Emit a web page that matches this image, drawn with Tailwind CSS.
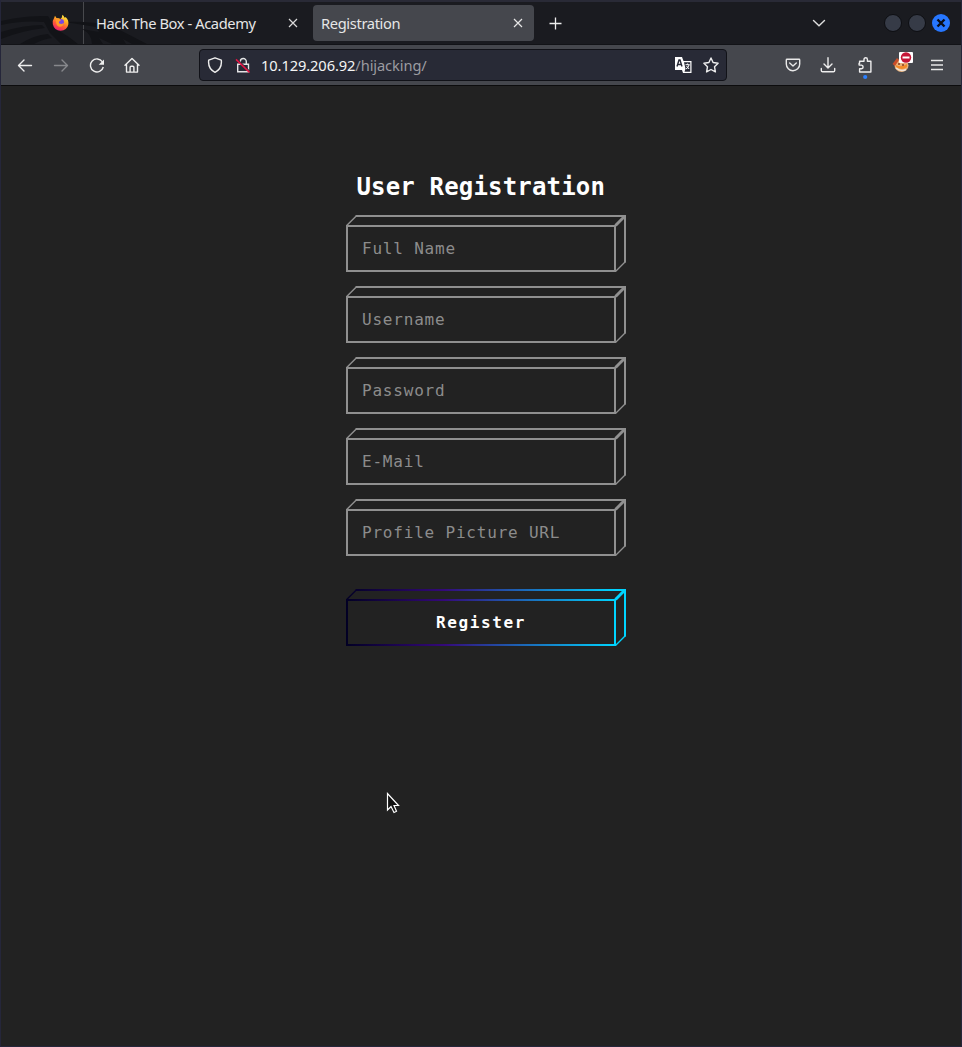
<!DOCTYPE html>
<html lang="en">
<head>
<meta charset="utf-8">
<title>Registration</title>
<script src="https://cdn.jsdelivr.net/npm/@tailwindcss/browser@4"></script>
</head>
<body class="bg-[#222222]">
<div class="relative flex h-[1047px] w-[962px] flex-col overflow-hidden border-x border-b border-[#25263a] bg-[#222222] font-['Noto_Sans',sans-serif] text-[14.67px] text-[#e6e6e6]">
  <div class="h-[2px] shrink-0 bg-[#292a36]"></div>
  <header class="relative flex h-[43px] shrink-0 items-center border-b border-[#121317] bg-[#1a1b20]">
    <svg class="absolute left-0 top-0" width="160" height="42" viewBox="1 2 160 42" fill="#121317">
      <path d="M1 21C18 17 32 16 48 16L56 29 69 37 78 44H61L50 33 44 22Q22 20 1 25Z"/><path d="M1 32Q24 25 42 25L45 28Q20 31 1 39Z"/><path d="M20 44Q34 35 48 34L52 38Q43 39 34 44Z"/><path d="M65 22Q90 21 112 26L147 44H132L123 39 126 44H112L99 38 103 44H92Q92 34 82 29L99 32 96 27Z"/>
    </svg>
    <svg class="relative ml-[51px] shrink-0" width="18" height="18" viewBox="0 0 18 18">
      <defs><linearGradient id="fox" x1=".8" y1="0" x2=".3" y2="1"><stop stop-color="#fff44f"/><stop offset=".35" stop-color="#ffad22"/><stop offset=".65" stop-color="#ff5b36"/><stop offset="1" stop-color="#e91b74"/></linearGradient></defs>
      <path fill="url(#fox)" d="M3 1.8 4.5 4 7 4.2 8.3 5 9.700 3.800 10.400.8Q12 2 12.300 3.600L13.800 3.200Q17 6 16.300 10.500 15 16.600 8.600 16.800 2.200 16.400.8 10.300.3 6.400 2.100 4Z"/>
      <circle cx="8.700" cy="8.300" r="3.300" fill="#7747e6"/>
      <path fill="#ff9928" d="M3.500 4.500 7.800 5 9 6.300 7.500 7.300Q6.300 8 7.200 9.400L9.600 10 12 9Q11 13 7.500 12.700 4.300 12 4 8Z"/>
    </svg>
    <div class="ml-[13px] h-[42px] w-px bg-[#48494d]"></div>
    <div class="relative ml-[12px] flex w-[207px] items-center justify-between">
      <span class="whitespace-nowrap tracking-[-0.4px]">Hack The Box - Academy</span>
      <svg class="mr-1" width="12" height="12" viewBox="0 0 12 12" stroke="#dadada" stroke-width="1.2"><path d="M2 2l8 8M10 2l-8 8"/></svg>
    </div>
    <div class="ml-[10px] flex h-9 w-[221px] items-center justify-between rounded bg-[#45474d] pl-2 pr-[10px]">
      <span class="tracking-[-0.35px]">Registration</span>
      <svg width="12" height="12" viewBox="0 0 12 12" stroke="#e6e6e6" stroke-width="1.2"><path d="M2 2l8 8M10 2l-8 8"/></svg>
    </div>
    <svg class="ml-[14px]" width="16" height="16" viewBox="0 0 16 16" stroke="#eeeeee" stroke-width="1.3"><path d="M1.500 8.500h12M7.500 2.500v12"/></svg>
    <svg class="ml-[247px]" width="16" height="16" viewBox="0 0 16 16" fill="none" stroke="#dedede" stroke-width="1.4" stroke-linecap="round"><path d="M2.500 5.500 8 10.800 13.500 5.500"/></svg>
    <div class="ml-[57px] flex items-center gap-[6px]">
      <div class="h-[18px] w-[18px] rounded-full border border-[#0d0e12] bg-[#363b47]"></div>
      <div class="h-[18px] w-[18px] rounded-full border border-[#0d0e12] bg-[#363b47]"></div>
      <svg width="18" height="18" viewBox="0 0 18 18"><circle cx="9" cy="9" r="9" fill="#2777ff"/><path d="M5.500 5.500l7 7M12.500 5.500l-7 7" stroke="#0b0e18" stroke-width="2.400"/></svg>
    </div>
  </header>
  <nav class="flex h-[41px] shrink-0 items-center border-b border-[#0c0c0d] bg-[#45474d]">
    <div class="ml-4 flex shrink-0 items-center gap-5">
      <svg width="16" height="16" viewBox="0 0 16 16" fill="none" stroke="#eeeeee" stroke-width="1.400" stroke-linecap="round" stroke-linejoin="round"><path d="M14.500 8.500H1.700M7 3 1.500 8.500 7 14"/></svg>
      <svg width="16" height="16" viewBox="0 0 16 16" fill="none" stroke="#87888c" stroke-width="1.400" stroke-linecap="round" stroke-linejoin="round"><path d="M1.500 8.500h12.800M9 3l5.500 5.500L9 14"/></svg>
      <svg class="translate-y-px" width="16" height="16" viewBox="0 0 16 16" fill="none" stroke="#eeeeee" stroke-width="1.400"><path d="M13.400 3.800A6.500 6.500 0 1 0 14.300 9"/><path d="M15 1.500v5.300H9.700Z" fill="#eeeeee" stroke="none"/></svg>
      <svg class="-ml-px" width="16" height="16" viewBox="0 0 16 16" fill="none" stroke="#eeeeee" stroke-width="1.400" stroke-linecap="round" stroke-linejoin="round"><path d="M1 8.300 8 1.500l7 6.800M2.500 7.300v7.800h11V7.300M6.100 14.700V10.300Q6.100 9.200 7.200 9.200h1.600Q9.900 9.200 9.900 10.300v4.400"/></svg>
    </div>
    <div class="ml-[59px] flex h-8 w-[528px] shrink-0 items-center rounded border border-[#111218] bg-[#282a36] pl-[7px] pr-[7px]">
      <svg width="16" height="16" viewBox="0 0 16 16" fill="none" stroke="#eeeeee" stroke-width="1.400" stroke-linejoin="round"><path d="M8 .8 14.300 3.200Q15.300 11.500 8 15.300.7 11.500 1.700 3.200Z"/></svg>
      <svg class="ml-3" width="16" height="16" viewBox="0 0 16 16" fill="none"><path d="M5.300 7V4.500a3 3 0 0 1 6 0V7M3 7.200h10.500v7.600H2.700V7.200Z" stroke="#e4e4e6" stroke-width="1.400"/><path d="M1.600 1.800l13.500 13" stroke="#282a36" stroke-width="1.300"/><path d="M1 2.400l13.500 13" stroke="#e31545" stroke-width="1.500"/></svg>
      <span class="ml-[10px] whitespace-nowrap tracking-[-0.1px] text-[#f4f4f4]">10.129.206.92<span class="text-[#9b9ba1]">/hijacking/</span></span>
      <div class="ml-auto flex items-center gap-[11px]">
        <svg width="17" height="16" viewBox="0 0 17 16"><path fill="#fff" d="M0 0h7l1.500 4H16.500V16H8l-1-3H0Z"/><path d="M2 9.500 4 3h1l2 6.500M2.700 7.500h3.500" fill="none" stroke="#282a36" stroke-width="1.400"/><path fill="#282a36" d="M9 5.200h6.300v9.500H9.500l1-3Z"/><path d="M10.500 7.700h4.200M12.600 6.500v1.200M14 8q-.7 3-3 4M11.500 9l2.600 3" fill="none" stroke="#fff"/></svg>
        <svg width="16" height="16" viewBox="0 0 16 16" fill="none" stroke="#eeeeee" stroke-width="1.400" stroke-linejoin="round"><path d="M8 1l2.100 4.500 5 .7-3.600 3.500.9 5.200L8 12.500l-4.400 2.400.9-5.200L.9 6.200l5-.7Z"/></svg>
      </div>
    </div>
    <div class="ml-[58px] flex items-center gap-5">
      <svg width="16" height="16" viewBox="0 0 16 16" fill="none" stroke="#e9e9e9" stroke-width="1.400" stroke-linecap="round" stroke-linejoin="round"><path d="M2 2.200h12q.7 0 .7.700v4q0 3-2 4.900T8 13.800 3.300 11.800 1.300 6.900v-4Q1.300 2.200 2 2.200M4.700 6 8 9l3.300-3"/></svg>
      <svg class="-ml-px mr-px" width="16" height="16" viewBox="0 0 16 16" fill="none" stroke="#eeeeee" stroke-width="1.400" stroke-linecap="round" stroke-linejoin="round"><path d="M8 .8v10M4 7l4 4 4-4M1.300 11.500v2q0 1.300 1.300 1.300h10.800q1.300 0 1.300-1.300v-2"/></svg>
      <svg class="overflow-visible" width="16" height="16" viewBox="0 0 16 16" fill="none" stroke="#eeeeee" stroke-width="1.400" stroke-linejoin="round"><path d="M2.600 4.600H7V2.700Q7 1 8.700 1t1.700 1.700v1.900h3.500v10.700H2.600V12H4.500Q6.100 11.700 6.100 10.200T4.500 8.400H2.100V6.600h.5Z" transform="translate(0 -.3)"/><circle cx="8.200" cy="20" r="2.100" fill="#2b80ff" stroke="none"/></svg>
      <svg class="ml-px overflow-visible" width="16" height="16" viewBox="0 0 16 16"><ellipse cx="7.500" cy="8.500" rx="7" ry="6.500" fill="#eab078"/><path d="M-1.500 7 3 1l2 2-4 6Z" fill="#c94d29"/><path d="M2 8q5 3 11-1v3q-5 4-11 0Z" fill="#f48b28"/><path d="M2 11q5 4 10 1.500" fill="none" stroke="#efe5da" stroke-width="1.500"/><path d="M4 7h2M8 8h2" stroke="#873e20" stroke-width="1.500"/><rect x="5" y="-5" width="14" height="11" rx="1" fill="#fff"/><circle cx="12" cy=".5" r="5.200" fill="#c51637"/><path d="M8.500.5h7" stroke="#fff" stroke-width="2"/></svg>
      <svg class="-ml-px" width="16" height="16" viewBox="0 0 16 16" stroke="#e8e8e8" stroke-width="1.300"><path d="M2 3.500h12M2 8h12M2 12.500h12"/></svg>
    </div>
  </nav>
  <svg width="0" height="0" class="absolute">
    <defs>
      <linearGradient id="edge" gradientUnits="userSpaceOnUse" x1="0" x2="280" y1="0" y2="0"><stop stop-color="#020024"/><stop offset=".35" stop-color="#340979"/><stop offset=".96" stop-color="#00d4ff"/></linearGradient>
      <g id="box" fill="none" stroke-width="2"><path d="M1 11H269V56H1Z"/><path d="M9.500 1H279V47.500"/><path d="M.7 10.500 10 1.200M269.500 56.500 279.500 46.500" stroke-width="1.400"/><path d="M269.500 10.500 279 1" stroke-width="3"/></g>
    </defs>
  </svg>
  <main class="flex flex-col pl-[345px] pt-[85px] font-['DejaVu_Sans_Mono',monospace] text-base">
    <h1 class="ml-[10.5px] whitespace-nowrap text-[24px] font-bold leading-8 tracking-[0.17px] text-white">User Registration</h1>
    <form class="mt-[12px] flex w-[280px] flex-col gap-[14px] tracking-[0.8px] text-[#8c8c8c]">
      <div class="grid h-[57px]"><svg class="col-start-1 row-start-1" width="280" height="57" stroke="#909090"><use href="#box"/></svg><span class="col-start-1 row-start-1 pl-4 pt-[22px]">Full Name</span></div>
      <div class="grid h-[57px]"><svg class="col-start-1 row-start-1" width="280" height="57" stroke="#909090"><use href="#box"/></svg><span class="col-start-1 row-start-1 pl-4 pt-[22px]">Username</span></div>
      <div class="grid h-[57px]"><svg class="col-start-1 row-start-1" width="280" height="57" stroke="#909090"><use href="#box"/></svg><span class="col-start-1 row-start-1 pl-4 pt-[22px]">Password</span></div>
      <div class="grid h-[57px]"><svg class="col-start-1 row-start-1" width="280" height="57" stroke="#909090"><use href="#box"/></svg><span class="col-start-1 row-start-1 pl-4 pt-[22px]">E-Mail</span></div>
      <div class="grid h-[57px]"><svg class="col-start-1 row-start-1" width="280" height="57" stroke="#909090"><use href="#box"/></svg><span class="col-start-1 row-start-1 pl-4 pt-[22px]">Profile Picture URL</span></div>
      <div class="mt-[19px] grid h-[57px] font-bold tracking-[1.6px] text-white"><svg class="col-start-1 row-start-1" width="280" height="57" stroke="url(#edge)"><use href="#box"/></svg><span class="col-start-1 row-start-1 w-[270px] pt-[22px] text-center">Register</span></div>
    </form>
  </main>
  <svg class="absolute left-[385px] top-[792px]" width="14" height="23" viewBox="0 0 14 23" stroke="#fff" stroke-width="1.200"><path d="M1.500 1.500V18L5 14.600 8 20.500 10.500 19.300 8 13.500H12.500Z" fill="#111"/></svg>
</div>
</body>
</html>
